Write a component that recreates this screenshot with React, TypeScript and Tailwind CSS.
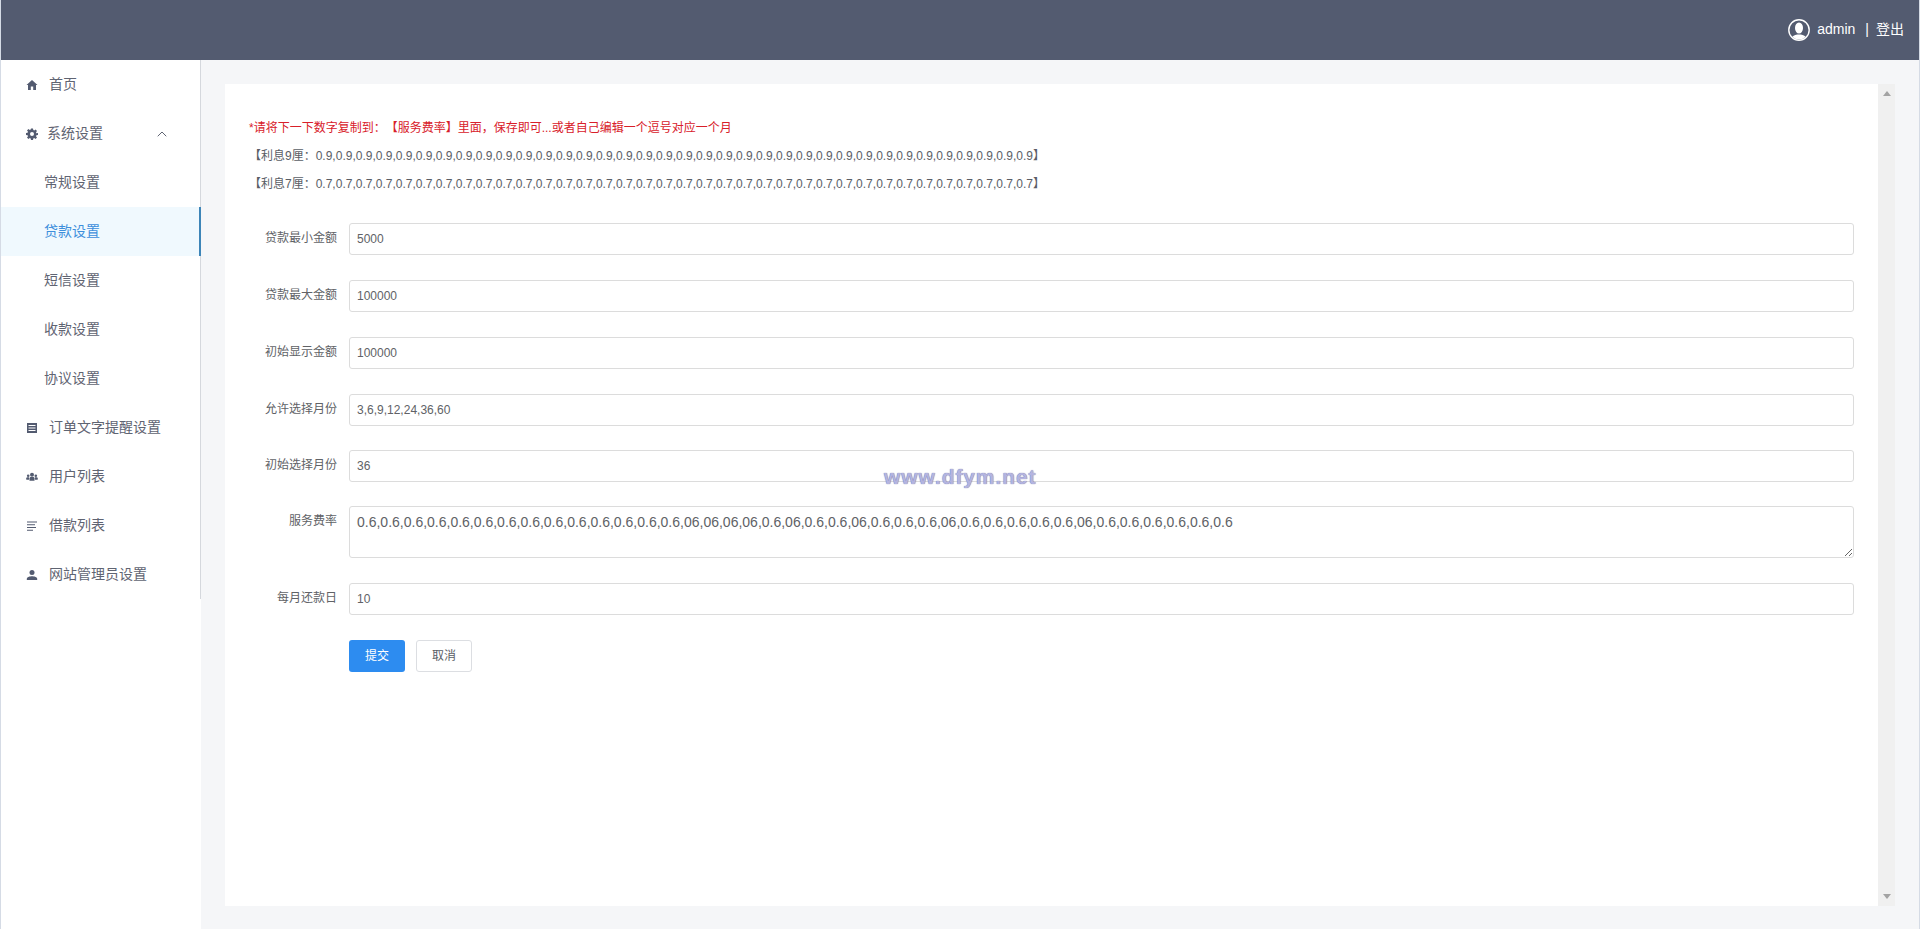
import React from 'react';
import { ChevronUp } from 'lucide-react';

const fontStack = "font-['Liberation_Sans','Noto_Sans_CJK_SC',sans-serif]";

const rate9 = Array(36).fill('0.9').join(',');
const rate7 = Array(36).fill('0.7').join(',');
const serviceRate =
  '0.6,0.6,0.6,0.6,0.6,0.6,0.6,0.6,0.6,0.6,0.6,0.6,0.6,0.6,06,06,06,06,0.6,06,0.6,0.6,06,0.6,0.6,0.6,06,0.6,0.6,0.6,0.6,0.6,06,0.6,0.6,0.6,0.6,0.6,0.6';

const HomeIcon = () => (
  <svg viewBox="0 0 12 12" className="w-3 h-3" fill="#535b70">
    <path d="M6 1 L11.500 6 H10 V11 H7.200 V7.500 H4.800 V11 H2 V6 H0.500 Z" />
  </svg>
);

const GearIcon = () => (
  <svg viewBox="0 0 24 24" className="w-3 h-3" fill="#535b70">
    <path
      fillRule="evenodd"
      d="M10 1h4l.6 3.200 1.800.8L19.200 3l2.800 2.800-2 2.800.8 1.800L24 10v4l-3.200.6-.8 1.800 2 2.800-2.800 2.800-2.800-2-1.800.8L14 24h-4l-.6-3.200-1.800-.8-2.800 2L2 19.200l2-2.800-.8-1.800L0 14v-4l3.200-.6.8-1.800-2-2.800L4.800 2l2.800 2 1.800-.8zM12 8a4 4 0 100 8 4 4 0 000-8z"
    />
  </svg>
);

const ListIcon = () => (
  <svg viewBox="0 0 12 12" className="w-3 h-3" fill="#535b70">
    <path
      fillRule="evenodd"
      d="M1 1h10v10H1zM2.500 3v1h7V3zm0 2.500v1h7v-1zm0 2.500v1h7V8z"
    />
  </svg>
);

const UsersIcon = () => (
  <svg viewBox="0 0 12 12" className="w-3 h-3" fill="#535b70">
    <circle cx="6" cy="3.800" r="2" />
    <path d="M3.500 9.800V7.200c0-.8.800-1.300 1.600-1.300h1.800c.8 0 1.600.5 1.600 1.300v2.600z" />
    <circle cx="2.200" cy="4.800" r="1.300" />
    <path d="M.3 8.800V7.300c0-.6.500-1.100 1.200-1.100H3v2.600z" />
    <circle cx="9.800" cy="4.800" r="1.300" />
    <path d="M11.700 8.800V7.300c0-.6-.5-1.100-1.200-1.100H9v2.600z" />
  </svg>
);

const LinesIcon = () => (
  <svg viewBox="0 0 12 12" className="w-3 h-3" fill="#535b70">
    <path d="M1 1.500h10v1H1zM1 4.200h8v1H1zM1 7h9v1H1zM1 9.700h6v1H1z" />
  </svg>
);

const PersonIcon = () => (
  <svg viewBox="0 0 12 12" className="w-3 h-3" fill="#535b70">
    <circle cx="6" cy="3.500" r="2.500" />
    <path d="M.8 11V9.800C.8 8 3.500 7.200 6 7.200s5.200.8 5.200 2.600V11z" />
  </svg>
);

const AvatarIcon = () => (
  <svg viewBox="0 0 22 22" className="w-[22px] h-[22px]">
    <defs>
      <clipPath id="avatarClip">
        <circle cx="11" cy="11" r="9.500" />
      </clipPath>
    </defs>
    <circle cx="11" cy="11" r="10.200" fill="#535b70" stroke="#ffffff" strokeWidth="1.400" />
    <g clipPath="url(#avatarClip)" fill="#ffffff">
      <ellipse cx="11" cy="9" rx="4" ry="5.500" />
      <path d="M3 22c0-5 3.500-6.500 8-6.500s8 1.500 8 6.500z" />
    </g>
  </svg>
);

const SideItem = ({
  label,
  icon,
  sub,
  active,
  chevron,
}: {
  label: string;
  icon?: React.ReactNode;
  sub?: boolean;
  active?: boolean;
  chevron?: boolean;
}) => (
  <div
    className={`h-[49px] flex items-center text-sm ${sub ? 'pl-[43px]' : 'pl-[25px]'} ${
      active ? '-mr-px bg-[#f0f9fe] text-[#3d8fdc] border-r-2 border-[#3d85b8]' : 'text-[#5f6472]'
    }`}
  >
    {icon && <span className={`flex shrink-0 ${chevron ? 'w-[21px]' : 'w-[23px]'}`}>{icon}</span>}
    <span className="pb-0.5">{label}</span>
    {chevron && <ChevronUp className="w-4 h-4 ml-[51px] text-[#5f6472]" strokeWidth={1.500} />}
  </div>
);

const Field = ({ label, value, className = 'mb-[25px]' }: { label: string; value: string; className?: string }) => (
  <div className={`flex items-center ${className}`}>
    <label className="w-[100px] pr-3 pb-0.5 text-right text-xs text-[#606266] shrink-0">{label}</label>
    <input
      readOnly
      value={value}
      className="flex-1 h-8 px-[7px] text-xs text-[#606266] bg-white border border-[#dcdcdc] rounded-[3px] outline-none"
    />
  </div>
);

const App: React.FC = () => {
  return (
    <div
      className={`relative h-[929px] overflow-hidden flex flex-col border-x border-[#d5dbe5] bg-[#f5f6f8] [text-spacing-trim:space-all] ${fontStack}`}
    >
      {/* header */}
      <div className="h-[60px] shrink-0 bg-[#535b70] flex items-center justify-end pr-[15px] text-white text-sm">
        <AvatarIcon />
        <span className="ml-[7px] pb-0.5">admin</span>
        <span className="ml-[10px] mr-[7px] pb-0.5">|</span>
        <span className="pb-0.5">登出</span>
      </div>

      <div className="flex flex-1 min-h-0">
        {/* sidebar */}
        <div className="w-[200px] shrink-0 bg-white">
          <div className="border-r border-[#d5d8dd] h-[539px]">
            <SideItem label="首页" icon={<HomeIcon />} />
            <SideItem label="系统设置" icon={<GearIcon />} chevron />
            <SideItem label="常规设置" sub />
            <SideItem label="贷款设置" sub active />
            <SideItem label="短信设置" sub />
            <SideItem label="收款设置" sub />
            <SideItem label="协议设置" sub />
            <SideItem label="订单文字提醒设置" icon={<ListIcon />} />
            <SideItem label="用户列表" icon={<UsersIcon />} />
            <SideItem label="借款列表" icon={<LinesIcon />} />
            <SideItem label="网站管理员设置" icon={<PersonIcon />} />
          </div>
        </div>

        {/* content */}
        <div className="flex-1 min-w-0 pt-6 pb-[23px] pl-6 pr-6">
          <div className="h-full flex bg-white">
            <div className="flex-1 min-w-0 pt-[30px] pl-6 pr-6">
              <p className="h-7 leading-7 text-xs text-[#d8202a]">
                *请将下一下数字复制到：【服务费率】里面，保存即可...或者自己编辑一个逗号对应一个月
              </p>
              <p className="h-7 leading-7 text-xs text-[#5a5e66]">【利息9厘：{rate9}】</p>
              <p className="h-7 leading-7 text-xs text-[#5a5e66]">【利息7厘：{rate7}】</p>

              <form className="mt-[25px]">
                <Field label="贷款最小金额" value="5000" />
                <Field label="贷款最大金额" value="100000" />
                <Field label="初始显示金额" value="100000" />
                <Field label="允许选择月份" value="3,6,9,12,24,36,60" className="mb-6" />
                <Field label="初始选择月份" value="36" className="mb-6" />
                <div className="flex items-start mb-[25px]">
                  <label className="w-[100px] pr-3 pt-[7px] text-right text-xs text-[#606266] shrink-0">服务费率</label>
                  <textarea
                    readOnly
                    value={serviceRate}
                    className="flex-1 h-[52px] px-[7px] py-[5px] text-sm leading-[21px] text-[#606266] bg-white border border-[#dcdcdc] rounded-[3px] outline-none"
                  />
                </div>
                <Field label="每月还款日" value="10" />
                <div className="flex gap-[11px] pl-[100px]">
                  <button type="button" className="w-14 h-8 text-xs text-white bg-[#2d8cf0] rounded-[3px]">
                    提交
                  </button>
                  <button
                    type="button"
                    className="w-14 h-8 text-xs text-[#5a5e66] bg-white border border-[#dcdee2] rounded-[3px]"
                  >
                    取消
                  </button>
                </div>
              </form>
            </div>

            {/* scrollbar */}
            <div className="w-[17px] shrink-0 bg-[#f0f0f0] flex flex-col items-center justify-between py-[7px]">
              <svg viewBox="0 0 8 5" className="w-2 h-[5px]" fill="#a3a3a3">
                <path d="M4 0 L8 5 H0 Z" />
              </svg>
              <svg viewBox="0 0 8 5" className="w-2 h-[5px]" fill="#a3a3a3">
                <path d="M0 0 H8 L4 5 Z" />
              </svg>
            </div>
          </div>
        </div>
      </div>

      {/* watermark */}
      <div className="absolute left-[883px] top-[463px] text-[21px] leading-7 font-bold tracking-[0.9px] text-[#b4b4e0] [text-shadow:0_0_1px_#50508c] pointer-events-none">
        www.dfym.net
      </div>
    </div>
  );
};

export default App;
